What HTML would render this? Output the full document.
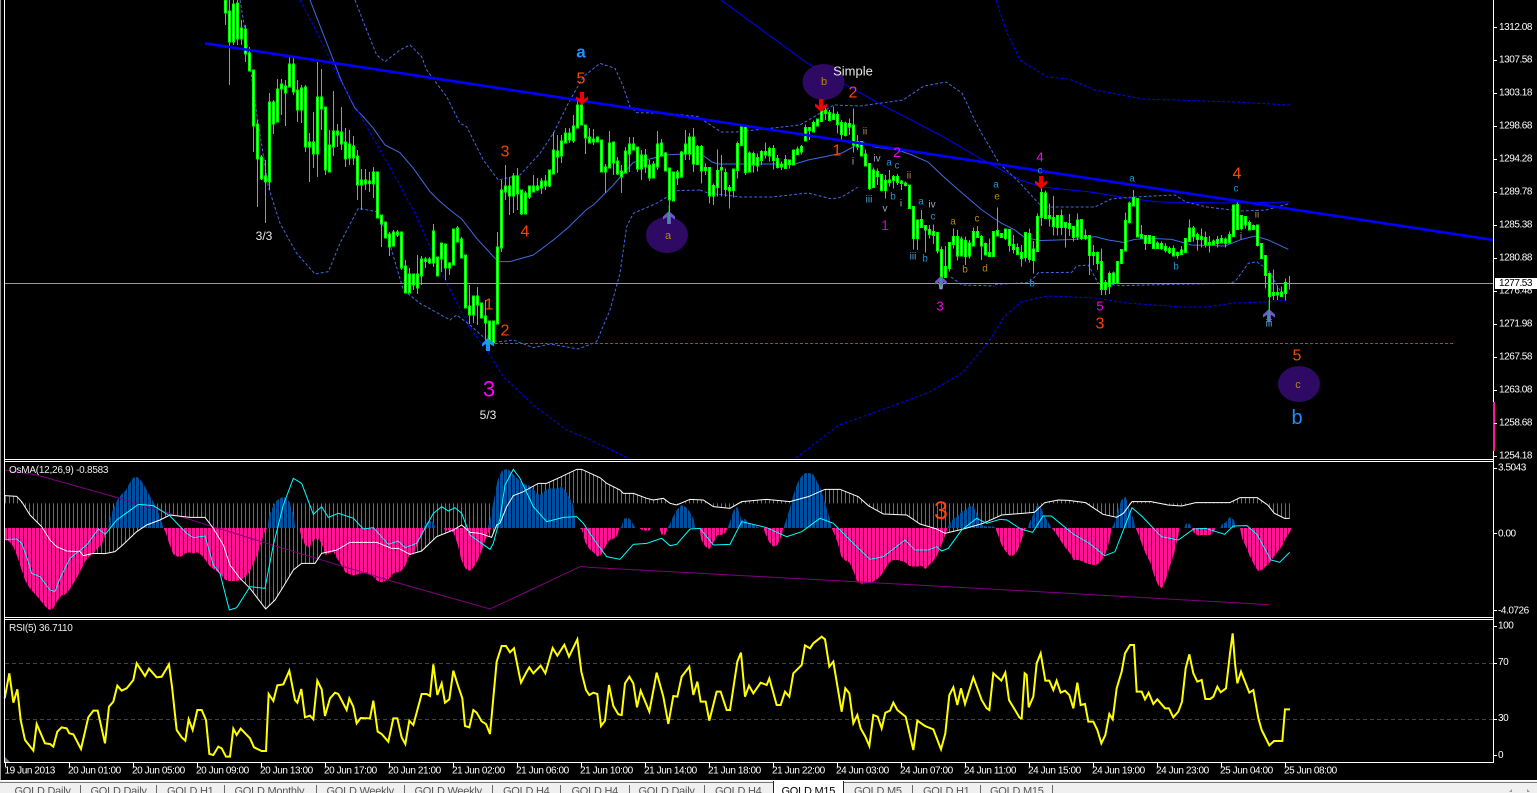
<!DOCTYPE html>
<html><head><meta charset="utf-8"><title>GOLD M15</title>
<style>
html,body{margin:0;padding:0;background:#000;overflow:hidden}
svg{display:block}
text{font-family:"Liberation Sans",sans-serif}
polyline,path.ns{vector-effect:non-scaling-stroke;fill:none}
.ax{font-size:10px;fill:#fff;letter-spacing:-.45px;dominant-baseline:central}
.tm{font-size:10px;fill:#fff;letter-spacing:-.42px;dominant-baseline:central}
.tab{font-size:11px;fill:#555;letter-spacing:-.25px}
.l{text-anchor:middle;dominant-baseline:central}
.o{fill:#ff4500;font-size:16px}
.m{fill:#f0f;font-size:13px}
.s{font-size:10px}
.bl{fill:#1e90d8}
.go{fill:#b8860b}
.gr{fill:#9aa6c0}
.i3{fill:#5aa0d8}
.i2{fill:#b09060}
.w{fill:#e8e8e8;font-size:12px}
</style></head><body>
<svg width="1537" height="793" viewBox="0 0 1537 793" xmlns="http://www.w3.org/2000/svg">
<defs>
<clipPath id="mc"><rect x="5" y="0" width="1488" height="459"/></clipPath>
<clipPath id="oc"><rect x="5" y="462" width="1488" height="155"/></clipPath>
<pattern id="hp" width="12" height="30" patternUnits="userSpaceOnUse"><rect x="0" width="9" height="30" fill="#ff1493" shape-rendering="crispEdges"/></pattern>
<pattern id="hb" width="12" height="30" patternUnits="userSpaceOnUse"><rect x="0" width="9" height="30" fill="#00509f" shape-rendering="crispEdges"/></pattern>
<pattern id="ht" width="12" height="30" patternUnits="userSpaceOnUse"><rect x="3" width="3" height="30" fill="#4169e1" shape-rendering="crispEdges"/></pattern>
<path id="da" d="M-2 0h4v7l4-2.500v3L0 13-6 7.500v-3L-2 7z"/>
<path id="ua" d="M-2 0h4v-7l4 2.500v-3L0-13-6-7.500v3L-2-7z"/>
</defs>
<rect width="1537" height="793" fill="#000"/>

<!-- MAIN WINDOW -->
<g clip-path="url(#mc)">
<g transform="translate(200,0) scale(.33333)">
<polyline stroke="#4169e1" stroke-width="1" points="330,0 400,180 425,245 465,325 490,350 520,385 555,435 600,458 640,505 690,575 715,600 750,630 785,657 830,715 885,775 900,785 930,785 1000,765 1060,720 1105,682 1160,628 1180,615 1240,555 1300,487 1345,478 1395,465 1450,462 1500,460"/>
<polyline stroke="#0000ff" stroke-width="1" stroke-dasharray="3 2" points="300,0 345,85 420,240 500,380 580,520 650,650 735,840 810,985 860,1050 910,1130 1000,1215 1100,1290 1165,1317 1290,1377"/>
<polyline stroke="#4169e1" stroke-width="1" stroke-dasharray="3 2" points="465,0 490,65 530,165 555,185 600,150 630,135 665,170 680,210 740,290 780,370 800,380 850,480 895,540 960,525 1020,460 1060,400 1105,310 1150,230 1200,190 1245,205 1270,260 1290,320 1310,338 1400,340 1500,350"/>
<polyline stroke="#4169e1" stroke-width="1" stroke-dasharray="3 2" points="120,0 135,90 170,340 205,560 240,670 290,760 345,822 385,815 420,730 475,625 530,635 560,700 610,870 660,910 700,932 750,960 770,945 810,975 860,1020 905,1025 940,1020 1000,1043 1050,1032 1135,1047 1190,1025 1230,930 1260,820 1280,680 1300,640 1370,610 1430,572 1500,570"/>
</g>
<polyline stroke="#0000ff" stroke-width="1" stroke-dasharray="3 2" points="796,458 839,425 876,412 930,392 962,373 988,343 1004,317 1021,302 1047,296 1095,298 1127,303 1181,307 1207,307 1234,303 1266,302 1288,300"/>
<polyline stroke="#0000ff" stroke-width="1" stroke-dasharray="3 2" points="996,0 1007,33 1020,60 1047,77 1069,79 1095,90 1143,99 1234,102 1290,105"/>
<polyline stroke="#0000ff" stroke-width="1" points="721,0 807,63 882,105 940,135 983,160 1020,180 1042,187 1090,192 1127,198 1159,202 1234,203 1290,202"/>
<polyline stroke="#4169e1" stroke-width="1" stroke-dasharray="3 2" points="700,118 721,132 737,132 800,125 834,105 860,106 903,100 924,86 946,82 962,93 978,127 999,163 1020,183 1042,207 1074,207 1095,207 1111,199 1133,197 1175,195 1186,202 1207,207 1240,211 1266,210 1288,204"/>
<polyline stroke="#4169e1" stroke-width="1" stroke-dasharray="3 2" points="700,190 708,193 741,197 772,197 808,193 832,199 842,197 858,187"/>
<polyline stroke="#4169e1" stroke-width="1" points="700,153 712,162 718,164 795,164 808,160 828,156 842,153 853,147 862,142 875,147 898,150 912,155 928,162 945,178 962,193 982,210 995,219"/>
<g transform="translate(995,130) scale(.33333)">
<polyline stroke="#4169e1" stroke-width="1" points="0,267 20,280 60,300 85,320 130,332 240,328 300,320 340,330 385,337 420,328 470,325 530,328 590,345 690,348 740,328 780,318 820,330 880,358"/>
<polyline stroke="#4169e1" stroke-width="1" stroke-dasharray="3 2" points="0,463 100,458 120,440 130,428 230,427 245,408 280,405 310,460 380,467 530,463 700,460 720,455 760,400 785,395 820,420 860,490"/>
</g>
<polyline stroke="#4169e1" stroke-width="1" stroke-dasharray="3 2" points="951,277 962,285 994,286"/>
<path d="M0 283.500H1493" stroke="#999" stroke-width="1" fill="none"/>
<path d="M490 343.500H1455" stroke="#e02828" stroke-width="1" stroke-dasharray="3 2" fill="none"/>

<g transform="translate(.5,0)" shape-rendering="crispEdges">
<path id="w1" fill="none" stroke="#0f0" stroke-width="1" d="M225 0V25M229 0V85M233 0V45M237 0V45M241 20V45M245 25V62M249 47V70M253 71V152M257 120V207M261 155V180M265 160V223M269 93V190M273 100V134M277 79V121M281 79V115M285 80V126M289 55V86M293 57V95M297 80V122M301 85V123M305 85V152M309 133V182M313 112V168M317 62V177M321 69V130M325 108V175M329 130V172M333 91V156M337 124V147M341 107V150M345 128V167M349 130V165M353 136V165M357 150V200M361 169V210M365 169V190M369 172V192M373 167V198M377 173V217M381 215V247M385 223V237M389 232V256M393 230V245M397 230V237M401 233V270M405 260V292M409 268V293M413 275V290M417 255V294M421 256V285M425 257V268M429 257V264M433 224V267M437 258V275M441 244V272M445 245V280M449 262V275M453 230V264M457 226V241M461 237V257M465 256V307M469 285V324M473 296V323M477 287V325M481 304V317M485 300V342M489 322V342M493 322V342M497 232V323M501 180V252M505 165V200M509 177V215M513 173V213M517 168V210M521 190V215M525 191V213M529 187V199M533 175V191M537 178V191M541 178V194M545 175V190M549 170V187M553 132V173M557 135V173M561 135V163M565 128V142M569 128V143M573 115V143M577 100V127M581 100V125M585 126V154M589 128V143M593 129V145M597 137V142M601 141V172M605 164V193M609 131V167M613 143V175M617 157V175M621 165V193M625 147V172M629 137V172M633 137V150M637 147V172M641 150V180M645 149V173M649 160V181M653 161V177M657 131V170M661 139V155M665 152V171M669 169V212M673 172V201M677 170V185M681 151V178M685 130V160M689 133V160M693 128V172"/>
<path id="b1" fill="none" stroke="#0f0" stroke-width="3" stroke-linecap="square" d="M225 1V12M229 12V41M233 5V41M237 4V38M241 29V38M245 30V53M249 54V70M253 71V125M257 125V158M261 158V178M265 177V181M269 103V181M273 103V123M277 90V121M281 85V88M285 87V92M289 65V86M293 65V91M297 91V109M301 89V109M305 88V146M309 143V146M313 143V153M317 98V153M321 98V108M325 108V169M329 146V171M333 132V146M337 132V134M341 133V143M345 143V158M349 145V157M353 147V157M357 157V184M361 181V184M365 181V183M369 182V182.500M373 173V183M377 173V217M381 216V223M385 223V237M389 235V246M393 233V245M397 233V234M401 233V267M405 267V292M409 275V292M413 275V284M417 275V287M421 260V275M425 260V260.500M429 260V262M433 232V262M437 258V275M441 244V258M445 245V267M449 264V267M453 230V264M457 229V241M461 240V257M465 256V307M469 307V314M473 297V314M477 297V304M481 304V317M485 317V322M489 322V342M493 322V342M497 248V323M501 191V247M505 187V191M509 187V195M513 177V195M517 177V193M521 191V213M525 194V213M529 187V196M533 187V191M537 187V189M541 182V187M545 182V185M549 171V185M553 151V173M557 152V156M561 142V155M565 134V142M569 134V139M573 127V140M577 106V127M581 106V124M585 126V137M589 138V142M593 140V141M597 138V141M601 141V171M605 168V171M609 144V167M613 143V162M617 162V173M621 172V176M625 152V172M629 145V153M633 145V149M637 148V168M641 156V168M645 156V166M649 166V177M653 165V177M657 145V166M661 144V155M665 154V170M669 169V199M673 173V200M677 173V177M681 153V176M685 145V153M689 138V153M693 138V163"/>
<path fill="none" stroke="#fff" stroke-width="1" d="M225 1V12M229 12V41M233 5V41M237 4V38M241 29V38M245 30V53M249 54V70M253 71V125M257 125V158M261 158V178M265 177V181M269 103V181M273 103V123M277 90V121M281 85V88M285 87V92M289 65V86M293 65V91M297 91V109M301 89V109M305 88V146M309 143V146M313 143V153M317 98V153M321 98V108M325 108V169M329 146V171M333 132V146M337 132V134M341 133V143M345 143V158M349 145V157M353 147V157M357 157V184M361 181V184M365 181V183M369 182V183M373 173V183M377 173V217M381 216V223M385 223V237M389 235V246M393 233V245M397 233V234M401 233V267M405 267V292M409 275V292M413 275V284M417 275V287M421 260V275M425 260V261M429 260V262M433 232V262M437 258V275M441 244V258M445 245V267M449 264V267M453 230V264M457 229V241M461 240V257M465 256V307M469 307V314M473 297V314M477 297V304M481 304V317M485 317V322M489 322V342M493 322V342M497 248V323M501 191V247M505 187V191M509 187V195M513 177V195M517 177V193M521 191V213M525 194V213M529 187V196M533 187V191M537 187V189M541 182V187M545 182V185M549 171V185M553 151V173M557 152V156M561 142V155M565 134V142M569 134V139M573 127V140M577 106V127M581 106V124M585 126V137M589 138V142M593 140V141M597 138V141M601 141V171M605 168V171M609 144V167M613 143V162M617 162V173M621 172V176M625 152V172M629 145V153M633 145V149M637 148V168M641 156V168M645 156V166M649 166V177M653 165V177M657 145V166M661 144V155M665 154V170M669 169V199M673 173V200M677 173V177M681 153V176M685 145V153M689 138V153M693 138V163"/>
</g>
<g transform="translate(695.5,90) scale(.33333)" shape-rendering="crispEdges">
<path class="ns" stroke="#0f0" stroke-width="1" d="M6 165V225M18 165V280M30 220V255M42 235V340M54 280V345M66 178V320M78 195V320M90 235V320M102 285V355M114 240V322M126 155V265M138 103V165M150 110V255M162 185V245M174 185V248M186 190V245M198 180V225M210 157V205M222 170V215M234 165V238M246 195V235M258 215V240M270 195V237M282 208V235M294 182V223M306 170V195M318 165V193M330 103V155M342 112V150M354 92V125M366 85V110M378 50V95M390 50V90M402 60V95M414 50V90M426 65V130M438 90V152M450 95V140M462 85V135M474 55V188M486 135V180M498 155V198M510 178V228M522 220V300M534 232V293M546 235V285M558 255V305M570 255V325M582 240V290M594 255V295M606 252V285M618 270V300M630 275V290M642 285V352M654 352V478M666 390V480M678 360V412M690 408V488M702 405V445M714 403V462M726 430V490M738 470V570M750 468V560M762 460V545M774 415V475M786 420V512M798 440V500M810 440V525M822 450V505M834 412V465M846 408V440M858 435V510M870 458V492M882 445V497M894 425V497"/>
<path id="b9" class="ns" stroke="#0f0" stroke-width="3" stroke-linecap="square" d="M6 172V220M18 172V240M30 235V238M42 235V315M54 290V315M66 245V290M78 235V237M90 250V295M102 295V300M114 240V298M126 163V238M138 112V163M150 112V245M162 192V243M174 193V222M186 205V225M198 187V208M210 187V192M222 178V195M234 178V208M246 208V230M258 227V228M270 212V232M282 213V220M294 183V222M306 180V190M318 172V183M330 115V150M342 115V118M354 100V123M366 90V105M378 65V92M390 65V68M402 70V88M414 75V86M426 76V100M438 100V130M450 102V133M462 103V108M474 108V162M486 157V168M498 157V195M510 195V225M522 223V293M534 243V290M546 248V256M558 256V298M570 275V298M582 273V274M594 262V268M606 262V274M618 276V277M630 282V283M642 288V352M654 352V442M666 393V442M678 392V410M690 409V417M702 422V430M714 428V433M726 431V480M738 481V560M750 533V560M762 460V533M774 443V460M786 443V495M798 450V495M810 455V497M822 462V495M834 428V465M846 428V440M858 442V465M870 463V492M882 490V497M894 427V497"/>
<path class="ns" stroke="#fff" stroke-width="1" d="M6 172V220M18 172V240M30 235V238M42 235V315M54 290V315M66 245V290M78 235V237M90 250V295M102 295V300M114 240V298M126 163V238M138 112V163M150 112V245M162 192V243M174 193V222M186 205V225M198 187V208M210 187V192M222 178V195M234 178V208M246 208V230M258 227V228M270 212V232M282 213V220M294 183V222M306 180V190M318 172V183M330 115V150M342 115V118M354 100V123M366 90V105M378 65V92M390 65V68M402 70V88M414 75V86M426 76V100M438 100V130M450 102V133M462 103V108M474 108V162M486 157V168M498 157V195M510 195V225M522 223V293M534 243V290M546 248V256M558 256V298M570 275V298M582 273V274M594 262V268M606 262V274M618 276V277M630 282V283M642 288V352M654 352V442M666 393V442M678 392V410M690 409V417M702 422V430M714 428V433M726 431V480M738 481V560M750 533V560M762 460V533M774 443V460M786 443V495M798 450V495M810 455V497M822 462V495M834 428V465M846 428V440M858 442V465M870 463V492M882 490V497M894 427V497"/>
</g>
<g transform="translate(995.5,130) scale(.33333)" shape-rendering="crispEdges">
<path class="ns" stroke="#0f0" stroke-width="1" d="M6 232V320M18 312V322M30 297V330M42 300V365M54 315V370M66 340V375M78 345V410M90 310V395M102 295V398M114 333V430M126 250V365M138 160V288M150 182V265M162 220V290M174 198V317M186 255V317M198 238V315M210 278V353M222 252V318M234 290V335M246 250V330M258 270V330M270 298V330M282 320V435M294 345V405M306 365V420M318 355V495M330 450V495M342 425V492M354 425V465M366 395V460M378 360V398M390 248V360M402 215V280M414 180V230M426 207V320M438 285V320M450 318V360M462 315V340M474 318V355M486 335V355M498 335V360M510 340V368M522 350V372M534 347V378M546 365V385M558 348V373M570 325V368M582 268V335M594 288V335M606 308V362M618 295V352M630 305V352M642 318V368M654 328V345M666 318V352M678 315V340M690 323V352M702 305V340M714 226V320M726 215V295M738 258V302M750 258V295M762 272V300M774 284V300M786 288V350M798 342V385M810 378V475M822 430V560M834 418V510M846 468V510M858 470V500M870 445V512M882 438V478"/>
<path id="b10" class="ns" stroke="#0f0" stroke-width="3" stroke-linecap="square" d="M6 305V315M18 313V320M30 300V322M42 302V343M54 347V355M66 355V370M78 370V382M90 310V380M102 313V385M114 360V388M126 262V362M138 190V260M150 192V262M162 260V263M174 265V287M186 260V290M198 260V290M210 280V290M222 283V292M234 293V320M246 273V318M258 272V322M270 320V323M282 320V373M294 370V373M306 370V397M318 397V476M330 460V476M342 433V467M354 432V458M366 397V458M378 362V397M390 275V360M402 222V275M414 205V225M426 208V318M438 316V321M450 320V338M462 320V338M474 322V353M486 342V352M498 343V352M510 352V358M522 358V364M534 358V375M546 371V373M558 363V370M570 328V365M582 297V332M594 297V316M606 316V325M618 322V326M630 325V341M642 340V341M654 336V341M666 332V338M678 328V336M690 330V338M702 316V336M714 228V316M726 226V295M738 260V292M750 262V282M762 280V297M774 289V296M786 288V344M798 344V383M810 380V433M822 433V496M834 490V494M846 490V492M858 489V496M870 460V487"/>
<path class="ns" stroke="#fff" stroke-width="1" d="M6 305V315M18 313V320M30 300V322M42 302V343M54 347V355M66 355V370M78 370V382M90 310V380M102 313V385M114 360V388M126 262V362M138 190V260M150 192V262M162 260V263M174 265V287M186 260V290M198 260V290M210 280V290M222 283V292M234 293V320M246 273V318M258 272V322M270 320V323M282 320V373M294 370V373M306 370V397M318 397V476M330 460V476M342 433V467M354 432V458M366 397V458M378 362V397M390 275V360M402 222V275M414 205V225M426 208V318M438 316V321M450 320V338M462 320V338M474 322V353M486 342V352M498 343V352M510 352V358M522 358V364M534 358V375M546 371V373M558 363V370M570 328V365M582 297V332M594 297V316M606 316V325M618 322V326M630 325V341M642 340V341M654 336V341M666 332V338M678 328V336M690 330V338M702 316V336M714 228V316M726 226V295M738 260V292M750 262V282M762 280V297M774 289V296M786 288V344M798 344V383M810 380V433M822 433V496M834 490V494M846 490V492M858 489V496M870 460V487"/>
</g>
<path d="M205 43.300L1493 240" stroke="#0000ff" stroke-width="2.600" fill="none"/>
<ellipse cx="667" cy="235" rx="21" ry="18" fill="#2e0a64"/>
<ellipse cx="823.500" cy="82" rx="21" ry="18" fill="#2e0a64"/>
<ellipse cx="1299" cy="384" rx="21" ry="18" fill="#2e0a64"/>
<use href="#da" x="582" y="92" fill="#f00000"/>
<use href="#da" x="821" y="99" fill="#f00000"/>
<use href="#da" x="1041" y="176" fill="#f00000"/>
<use href="#ua" x="669" y="224" fill="#6a5acd"/>
<use href="#ua" x="941" y="289" fill="#6a5acd"/>
<use href="#ua" x="1269" y="322" fill="#6a5acd"/>
<use href="#ua" x="488" y="351" fill="#1e90ff"/>
<path d="M669 205V224M941 270V289M1269 300V322M488 335V345" stroke="#0f0" stroke-width="1" opacity=".6"/>
<text class="l" x="581" y="52" fill="#1e90ff" font-size="17" font-weight="700">a</text>
<text class="l o" x="581" y="79">5</text>
<text class="l o" x="505" y="152" font-size="17">3</text>
<text class="l o" x="525" y="232" font-size="17">4</text>
<text class="l o" x="489" y="305">1</text>
<text class="l o" x="505" y="331" font-size="17">2</text>
<text class="l" x="489" y="389" fill="#f0f" font-size="22">3</text>
<text class="l w" x="488" y="415">5/3</text>
<text class="l w" x="264" y="236">3/3</text>
<text class="l w" x="853" y="71" style="font-size:13px">Simple</text>
<text class="l o" x="853" y="93">2</text>
<text class="l o" x="837" y="151">1</text>
<text class="l" x="897" y="152" fill="#f0f" font-size="14">2</text>
<text class="l" x="885" y="225" fill="#d000d0" font-size="14">1</text>
<text class="l" x="940" y="306" fill="#f0f" font-size="13">3</text>
<text class="l" x="1040" y="157" fill="#f0f" font-size="13">4</text>
<text class="l" x="1100" y="306" fill="#f0f" font-size="13">5</text>
<text class="l o" x="1100" y="324">3</text>
<text class="l o" x="1237" y="174">4</text>
<text class="l o" x="1297" y="356">5</text>
<text class="l" x="1297" y="418" fill="#1e90ff" font-size="20">b</text>
<text class="l go" x="668" y="236" font-size="11">a</text>
<text class="l go" x="824" y="82" font-size="11">b</text>
<text class="l go" x="1298" y="385" font-size="11">c</text>
<g>
<text class="l s i2" x="865" y="132">ii</text><text class="l s gr" x="853" y="162">i</text><text class="l s gr" x="877" y="159">iv</text>
<text class="l s bl" x="889" y="163">a</text><text class="l s bl" x="897" y="166">c</text><text class="l s i2" x="909" y="176">ii</text>
<text class="l s i3" x="869" y="200">iii</text><text class="l s bl" x="893" y="197">b</text><text class="l s gr" x="885" y="209">v</text>
<text class="l s gr" x="901" y="204">i</text><text class="l s bl" x="921" y="202">a</text><text class="l s gr" x="932" y="205">iv</text>
<text class="l s bl" x="933" y="217">c</text><text class="l s go" x="953" y="222">a</text><text class="l s go" x="977" y="219">c</text>
<text class="l s i3" x="913" y="257">iii</text><text class="l s bl" x="925" y="259">b</text><text class="l s go" x="965" y="270">b</text>
<text class="l s go" x="985" y="269">d</text><text class="l s gr" x="941" y="287">v</text>
<text class="l s bl" x="996" y="185">a</text><text class="l s go" x="997" y="197">e</text><text class="l s bl" x="1032" y="284">b</text>
<text class="l s bl" x="1040" y="171">c</text><text class="l s bl" x="1132" y="179">a</text><text class="l s bl" x="1236" y="189">c</text>
<text class="l s i2" x="1257" y="215">ii</text><text class="l s gr" x="1241" y="237">i</text><text class="l s bl" x="1176" y="267">b</text><text class="l s i3" x="1269" y="324">iii</text>
</g>
</g>

<!-- OSMA WINDOW -->
<g clip-path="url(#oc)">
<g transform="translate(0,455) scale(.33333)">
<path fill="url(#ht)" d="M14 122L50 124 65 140 90 180 125 215 150 255 170 275 200 288 240 290 250 302 280 295 315 296 345 290 370 268 410 230 440 210 480 195 510 180 570 187 615 187 640 220 670 270 690 330 720 370 750 400 797 462 825 435 850 395 880 345 905 325 945 325 965 295 1010 285 1050 262 1130 262 1175 280 1195 280 1230 298 1265 288 1310 245 1360 225 1385 210 1410 232 1440 235 1475 247 1490 210 1500 205V145H14Z"/>
<g>
<path fill="url(#hp)" d="M14 219L16 255 28 260 40 275 52 305 64 342 76 378 88 398 100 412 112 425 124 440 136 455 148 465 160 460 172 438 184 422 196 418 208 405 220 385 232 365 244 342 256 318 268 305 280 295 292 280 304 270 316 240 322 219Z"/>
<path fill="url(#hp)" d="M490 219L496 230 508 267 520 298 532 305 544 305 556 295 568 292 580 295 592 292 604 300 616 315 628 332 640 342 652 350 664 362 676 375 688 378 700 378 712 378 724 375 736 365 748 352 760 326 772 300 784 262 796 226 802 219Z"/>
<path fill="url(#hp)" d="M898 219L904 245 916 272 928 278 940 255 952 250 964 263 976 300 988 295 1000 290 1012 312 1024 330 1036 352 1048 357 1060 362 1072 358 1084 355 1096 352 1108 358 1120 365 1132 378 1144 382 1156 378 1168 370 1180 355 1192 352 1204 348 1216 332 1228 300 1240 298 1252 270 1264 245 1276 222 1282 219Z"/>
<path fill="url(#hp)" d="M1332 219L1336 228 1348 225 1360 232 1372 265 1384 315 1396 340 1408 348 1420 338 1432 318 1444 290 1456 255 1468 228 1474 219Z"/>
<path fill="url(#hb)" d="M325 219L328 197 340 160 352 135 364 118 376 108 388 85 400 68 412 66 424 78 436 97 448 120 460 140 472 165 484 195 490 219Z"/>
<path fill="url(#hb)" d="M802 219L808 180 820 152 832 135 844 127 856 127 868 140 880 178 886 219Z"/>
<path fill="url(#hb)" d="M1270 219L1276 205 1288 198 1300 200 1306 219Z"/>
</g>
</g>
<g transform="translate(500,455) scale(.33333)">
<path fill="url(#ht)" d="M0 205L20 155 40 122 70 110 115 85 140 85 180 67 230 43 245 43 300 68 320 85 360 105 370 115 400 115 440 130 460 135 490 130 510 145 530 150 570 133 610 135 640 155 690 160 725 140 800 133 870 140 925 125 975 103 1020 103 1075 125 1105 152 1150 177 1220 180 1260 207 1310 222 1335 235 1390 222 1450 205 1505 180 1567 175 1603 172 1634 143 1675 135 1706 136 1757 143 1809 178 1850 187 1870 175 1896 140 1953 140 2004 150 2045 153 2087 143 2189 143 2220 128 2272 128 2303 150 2323 175 2354 190 2372 190V145H0Z"/>
<path fill="url(#hb)" d="M-38 219L-32 204-20 142-8 78 4 50 16 42 28 45 40 58 52 70 64 82 76 88 88 92 100 102 112 118 124 118 136 105 148 100 160 100 172 100 184 95 196 105 208 128 220 150 228 219Z"/>
<path fill="url(#hb)" d="M360 219L364 216 372 190 388 190 400 208 406 219Z"/>
<path fill="url(#hb)" d="M502 219L508 210 520 183 532 163 544 150 556 155 568 168 580 190 586 219Z"/>
<path fill="url(#hb)" d="M682 219L688 205 700 168 712 155 724 195 736 192 748 207 760 208 772 215 780 219Z"/>
<path fill="url(#hb)" d="M850 219L856 202 868 165 880 120 892 85 904 64 916 54 928 54 940 58 952 82 964 105 976 148 988 186 994 219Z"/>
<path fill="url(#hb)" d="M1342 219L1348 207 1360 190 1372 185 1384 170 1396 165 1408 153 1420 153 1432 178 1444 208 1456 214 1468 214 1480 214 1486 219Z"/>
<path fill="url(#hb)" d="M1584 219L1587 205 1600 178 1611 150 1623 158 1635 185 1647 205 1654 219Z"/>
<path fill="url(#hb)" d="M1835 219L1841 210 1853 170 1864 135 1877 125 1889 165 1900 190 1906 219Z"/>
<path fill="url(#hb)" d="M2053 219L2058 205 2070 207 2074 219Z"/>
<path fill="url(#hb)" d="M2161 219L2165 208 2177 202 2189 186 2202 195 2208 219Z"/>
<path fill="url(#hp)" d="M240 219L246 225 256 263 268 282 280 292 292 305 304 298 316 275 328 255 340 252 352 242 358 219Z"/>
<path fill="url(#hp)" d="M418 219L424 224 436 227 448 227 452 219Z"/>
<path fill="url(#hp)" d="M478 219L484 238 496 240 502 219Z"/>
<path fill="url(#hp)" d="M598 219L604 255 616 275 628 282 640 264 652 240 664 240 676 234 682 219Z"/>
<path fill="url(#hp)" d="M790 219L796 236 808 262 820 275 832 270 844 245 850 219Z"/>
<path fill="url(#hp)" d="M994 219L1000 230 1012 260 1024 305 1036 317 1048 322 1060 348 1072 382 1084 386 1096 385 1108 383 1120 380 1132 372 1144 360 1156 340 1168 322 1180 315 1192 315 1204 318 1216 322 1228 333 1240 335 1252 335 1264 332 1276 342 1288 330 1300 318 1312 300 1324 270 1336 240 1342 219Z"/>
<path fill="url(#hp)" d="M1486 219L1492 235 1504 268 1516 288 1528 302 1540 302 1552 288 1564 258 1574 225 1580 219Z"/>
<path fill="url(#hp)" d="M1656 219L1673 243 1685 262 1698 280 1710 295 1721 315 1734 315 1745 318 1757 324 1770 328 1781 330 1793 328 1806 315 1817 295 1829 255 1835 219Z"/>
<path fill="url(#hp)" d="M1907 219L1914 235 1926 268 1938 298 1951 323 1962 360 1974 390 1986 400 1998 372 2009 335 2022 297 2033 250 2039 219Z"/>
<path fill="url(#hp)" d="M2076 219L2081 233 2094 242 2105 240 2117 240 2130 240 2142 228 2148 219Z"/>
<path fill="url(#hp)" d="M2220 219L2226 250 2239 277 2250 305 2263 330 2274 348 2286 345 2297 335 2310 322 2322 305 2333 290 2346 274 2357 250 2369 232 2375 219Z"/>
</g>
<g transform="translate(0,455) scale(.33333)"><polyline stroke="#800080" stroke-width="1" points="14,45 110,60 360,130 640,215 800,265 1180,380 1470,462 1560,420"/></g>
<g transform="translate(500,455) scale(.33333)"><polyline stroke="#800080" stroke-width="1" points="60,420 242,334 270,337 1560,407 2308,449"/></g>
<g transform="translate(0,455) scale(.33333)">
<polyline stroke="#fff" stroke-width="1" points="14,122 50,124 65,140 90,180 125,215 150,255 170,275 200,288 240,290 250,302 280,295 315,296 345,290 370,268 410,230 440,210 480,195 510,180 570,187 615,187 640,220 670,270 690,330 720,370 750,400 797,462 825,435 850,395 880,345 905,325 945,325 965,295 1010,285 1050,262 1130,262 1175,280 1195,280 1230,298 1265,288 1310,245 1360,225 1385,210 1410,232 1440,235 1475,247 1490,210 1500,205"/>
<polyline stroke="#0ff" stroke-width="1" points="14,253 50,252 65,265 85,320 95,355 120,365 150,405 165,410 180,370 210,310 235,290 260,270 295,222 316,238 350,195 385,170 415,148 460,152 510,183 560,235 580,248 615,243 640,330 660,355 688,465 710,458 750,395 795,400 820,270 850,150 880,70 905,85 940,178 965,155 985,187 1015,175 1060,190 1090,222 1120,218 1165,268 1195,258 1215,278 1250,265 1300,175 1325,155 1345,168 1365,158 1385,175 1410,240 1470,283 1480,265 1500,190"/>
</g>
<g transform="translate(500,455) scale(.33333)">
<polyline stroke="#fff" stroke-width="1" points="0,205 20,155 40,122 70,110 115,85 140,85 180,67 230,43 245,43 300,68 320,85 360,105 370,115 400,115 440,130 460,135 490,130 510,145 530,150 570,133 610,135 640,155 690,160 725,140 800,133 870,140 925,125 975,103 1020,103 1075,125 1105,152 1150,177 1220,180 1260,207 1310,222 1335,235 1390,222 1450,205 1505,180 1567,175 1603,172 1634,143 1675,135 1706,136 1757,143 1809,178 1850,187 1870,175 1896,140 1953,140 2004,150 2045,153 2087,143 2189,143 2220,128 2272,128 2303,150 2323,175 2354,190 2369,190"/>
<polyline stroke="#0ff" stroke-width="1" points="0,190 15,90 40,43 60,70 100,155 140,200 190,187 230,185 250,205 290,265 320,305 360,313 400,268 440,265 485,250 510,272 530,268 570,222 600,220 640,270 690,268 725,200 800,218 860,245 905,230 960,190 1000,205 1050,255 1110,313 1150,305 1215,255 1245,285 1285,285 1310,275 1325,288 1345,280 1385,225 1430,190 1460,205 1500,193 1521,195 1562,222 1598,232 1629,183 1654,183 1721,238 1768,265 1814,302 1845,290 1896,158 1927,185 1984,245 2035,255 2081,222 2117,220 2174,238 2200,213 2241,212 2272,240 2313,315 2339,322 2369,292"/>
</g>
<text x="941" y="511" class="l" fill="#ff4500" font-size="25">3</text>
<text x="9" y="470.500" font-size="10" fill="#eee" dominant-baseline="central" letter-spacing="-.25">OsMA(12,26,9) -0.8583</text>
</g>

<!-- RSI WINDOW -->
<path d="M5 663.500H1493M5 719.500H1493" stroke="#444" stroke-width="1" stroke-dasharray="4 3" fill="none"/>
<text x="9" y="628.500" font-size="10" fill="#eee" dominant-baseline="central" letter-spacing="-.25">RSI(5) 36.7110</text>
<path d="M5 757l5 5h-5z" fill="#778"/>
<g stroke-linejoin="miter">
<g transform="translate(0,620) scale(.33333)"><polyline stroke="#ff0" stroke-width="2" points="14,235 28,160 40,248 52,208 62,300 75,360 100,392 110,312 135,370 150,372 160,380 172,335 185,322 200,325 208,340 220,343 243,387 265,292 280,272 293,272 315,370 327,260 340,245 352,197 365,212 380,205 400,180 410,130 420,145 435,168 447,146 470,172 485,170 507,133 516,200 530,330 545,352 556,362 566,298 578,330 592,270 605,270 618,300 628,402 640,405 655,380 665,385 678,410 690,410 700,326 710,345 722,326 750,355 762,382 785,393 798,393 806,222 820,243 832,196 850,193 868,152 885,240 892,248 904,207 915,292 930,287 940,298 952,182 965,208 975,288 990,235 1005,218 1015,222 1040,270 1048,235 1060,260 1070,310 1082,294 1110,295 1120,242 1133,335 1145,342 1165,365 1180,295 1192,295 1205,352 1216,372 1228,302 1240,315 1265,222 1280,222 1290,228 1300,133 1312,225 1325,190 1335,248 1348,238 1360,152 1375,200 1387,235 1395,318 1408,322 1420,270 1430,278 1445,304 1458,312 1470,342 1490,125 1505,78 1518,78 1530,97 1542,85 1560,175"/></g>
<g transform="translate(510,620) scale(.33333)"><polyline stroke="#ff0" stroke-width="2" points="30,175 33,188 50,155 58,142 70,160 92,137 106,160 128,84 142,107 163,74 177,110 202,58 214,155 228,210 238,225 250,218 262,222 273,318 285,302 297,195 310,258 325,283 335,285 345,190 358,170 370,190 381,262 392,212 418,275 440,158 460,230 475,312 490,228 502,230 515,170 538,140 550,225 562,185 572,245 587,245 598,302 620,215 632,215 650,270 660,270 682,125 693,98 705,230 717,197 730,220 752,188 770,195 778,175 800,255 812,255 825,215 838,230 850,160 875,135 885,76 900,85 910,70 935,50 945,58 958,140 970,125 995,275 1006,205 1018,220 1030,310 1042,285 1052,325 1066,350 1078,378 1090,285 1103,290 1115,325 1126,278 1140,272 1150,248 1162,270 1187,290 1210,390 1222,302 1245,318 1270,328 1293,388 1306,340 1318,225 1330,202 1342,255 1353,205 1365,252 1390,172 1415,240 1430,265 1438,270 1450,160 1474,182 1486,158 1497,240 1530,295"/></g>
<g transform="translate(1020,620) scale(.33333)"><polyline stroke="#ff0" stroke-width="2" points="0,295 5,295 14,160 20,165 26,262 40,230 50,130 62,100 76,182 88,182 100,210 110,182 122,218 135,212 148,225 160,265 172,188 182,255 195,252 205,305 220,305 232,330 244,370 256,345 268,282 278,298 290,205 305,155 315,100 330,75 342,75 350,215 365,215 375,238 386,218 400,252 412,238 435,265 447,265 460,292 475,275 486,245 497,145 508,103 520,160 532,185 545,180 556,237 570,237 580,230 592,200 602,217 618,205 630,100 638,40 645,130 652,190 663,155 688,218 700,210 715,295 725,330 748,376 762,363 787,363 795,268 810,268"/></g>
</g>

<!-- FRAMES -->
<g shape-rendering="crispEdges" fill="#fff">
<rect x="0" y="0" width="1" height="781" fill="#9a9a9a"/>
<rect x="4" y="0" width="1" height="763"/>
<rect x="1493" y="0" width="1" height="763"/>
<rect x="4" y="459" width="1490" height="1"/>
<rect x="4" y="461" width="1490" height="1"/>
<rect x="4" y="617" width="1490" height="1"/>
<rect x="4" y="619" width="1490" height="1"/>
<rect x="4" y="762" width="1490" height="1"/>
<rect x="1493" y="402" width="2" height="49" fill="#ff1493"/>
</g>
<path d="M1494 27.500h3M1494 60.500h3M1494 93.500h3M1494 126.500h3M1494 159.500h3M1494 192.500h3M1494 225.500h3M1494 258.500h3M1494 291.500h3M1494 324.500h3M1494 357.500h3M1494 390.500h3M1494 423.500h3M1494 456.500h3M1494 468.500h3M1494 533.500h3M1494 610.500h3M1494 626.500h3M1494 663.500h3M1494 719.500h3M1494 755.500h3" stroke="#fff" stroke-width="1" fill="none"/>
<g>
<text class="ax" x="1499" y="27.500">1312.08</text>
<text class="ax" x="1499" y="60">1307.58</text>
<text class="ax" x="1499" y="93">1303.18</text>
<text class="ax" x="1499" y="126">1298.68</text>
<text class="ax" x="1499" y="159">1294.28</text>
<text class="ax" x="1499" y="192">1289.78</text>
<text class="ax" x="1499" y="225">1285.38</text>
<text class="ax" x="1499" y="258">1280.88</text>
<text class="ax" x="1499" y="291">1276.48</text>
<text class="ax" x="1499" y="324">1271.98</text>
<text class="ax" x="1499" y="357">1267.58</text>
<text class="ax" x="1499" y="390">1263.08</text>
<text class="ax" x="1499" y="423">1258.68</text>
<text class="ax" x="1499" y="456">1254.18</text>
<text class="ax" x="1498" y="468">3.5043</text>
<text class="ax" x="1498" y="534">0.00</text>
<text class="ax" x="1498" y="611">-4.0726</text>
<text class="ax" x="1498" y="626">100</text>
<text class="ax" x="1498" y="662.500">70</text>
<text class="ax" x="1498" y="718.500">30</text>
<text class="ax" x="1498" y="755.500">0</text>
</g>
<rect x="1495" y="278" width="42" height="11" fill="#fff"/>
<text class="ax" x="1499" y="283.500" style="fill:#000">1277.53</text>
<path d="M5.500 763v4M69.500 763v4M133.500 763v4M197.500 763v4M261.500 763v4M325.500 763v4M389.500 763v4M453.500 763v4M517.500 763v4M581.500 763v4M645.500 763v4M709.500 763v4M773.500 763v4M837.500 763v4M901.500 763v4M965.500 763v4M1029.500 763v4M1093.500 763v4M1157.500 763v4M1221.500 763v4M1285.500 763v4" stroke="#fff" stroke-width="1" fill="none"/>
<text class="tm" x="4.500" y="771">19 Jun 2013</text>
<text class="tm" x="68" y="771">20 Jun 01:00</text>
<text class="tm" x="132" y="771">20 Jun 05:00</text>
<text class="tm" x="196" y="771">20 Jun 09:00</text>
<text class="tm" x="260" y="771">20 Jun 13:00</text>
<text class="tm" x="324" y="771">20 Jun 17:00</text>
<text class="tm" x="388" y="771">20 Jun 21:00</text>
<text class="tm" x="452" y="771">21 Jun 02:00</text>
<text class="tm" x="516" y="771">21 Jun 06:00</text>
<text class="tm" x="580" y="771">21 Jun 10:00</text>
<text class="tm" x="644" y="771">21 Jun 14:00</text>
<text class="tm" x="708" y="771">21 Jun 18:00</text>
<text class="tm" x="772" y="771">21 Jun 22:00</text>
<text class="tm" x="836" y="771">24 Jun 03:00</text>
<text class="tm" x="900" y="771">24 Jun 07:00</text>
<text class="tm" x="964" y="771">24 Jun 11:00</text>
<text class="tm" x="1028" y="771">24 Jun 15:00</text>
<text class="tm" x="1092" y="771">24 Jun 19:00</text>
<text class="tm" x="1156" y="771">24 Jun 23:00</text>
<text class="tm" x="1220" y="771">25 Jun 04:00</text>
<text class="tm" x="1284" y="771">25 Jun 08:00</text>

<!-- TAB BAR -->
<rect x="0" y="780" width="1537" height="1" fill="#fff"/>
<rect x="0" y="781" width="1537" height="12" fill="#f0f0f0"/>
<rect x="0" y="782" width="773" height="1" fill="#777"/>
<rect x="843" y="782" width="694" height="1" fill="#777"/>
<rect x="773" y="781" width="71" height="12" fill="#fff"/>
<path d="M773.500 781V793M843.500 781V793" stroke="#222" stroke-width="1" fill="none"/>
<path d="M80.500 785V793M156.500 785V793M224.500 785V793M316.500 785V793M404.500 785V793M492.500 785V793M560.500 785V793M629.500 785V793M704.500 785V793M912.500 785V793M980.500 785V793M1052.500 785V793" stroke="#666" stroke-width="1" fill="none"/>
<text class="tab" x="14.500" y="794.500">GOLD Daily</text>
<text class="tab" x="90.500" y="794.500">GOLD Daily</text>
<text class="tab" x="167" y="794.500">GOLD H1</text>
<text class="tab" x="234.500" y="794.500">GOLD Monthly</text>
<text class="tab" x="326.500" y="794.500">GOLD Weekly</text>
<text class="tab" x="414.500" y="794.500">GOLD Weekly</text>
<text class="tab" x="503" y="794.500">GOLD H4</text>
<text class="tab" x="571.500" y="794.500">GOLD H4</text>
<text class="tab" x="638.500" y="794.500">GOLD Daily</text>
<text class="tab" x="715" y="794.500">GOLD H4</text>
<text class="tab" x="781.500" y="794.500" style="fill:#000">GOLD M15</text>
<text class="tab" x="854" y="794.500">GOLD M5</text>
<text class="tab" x="923" y="794.500">GOLD H1</text>
<text class="tab" x="990" y="794.500">GOLD M15</text>
<path d="M1512 789l-3 3h3zM1527 789l3 3h-3z" fill="#999"/>
</svg>
</body></html>
